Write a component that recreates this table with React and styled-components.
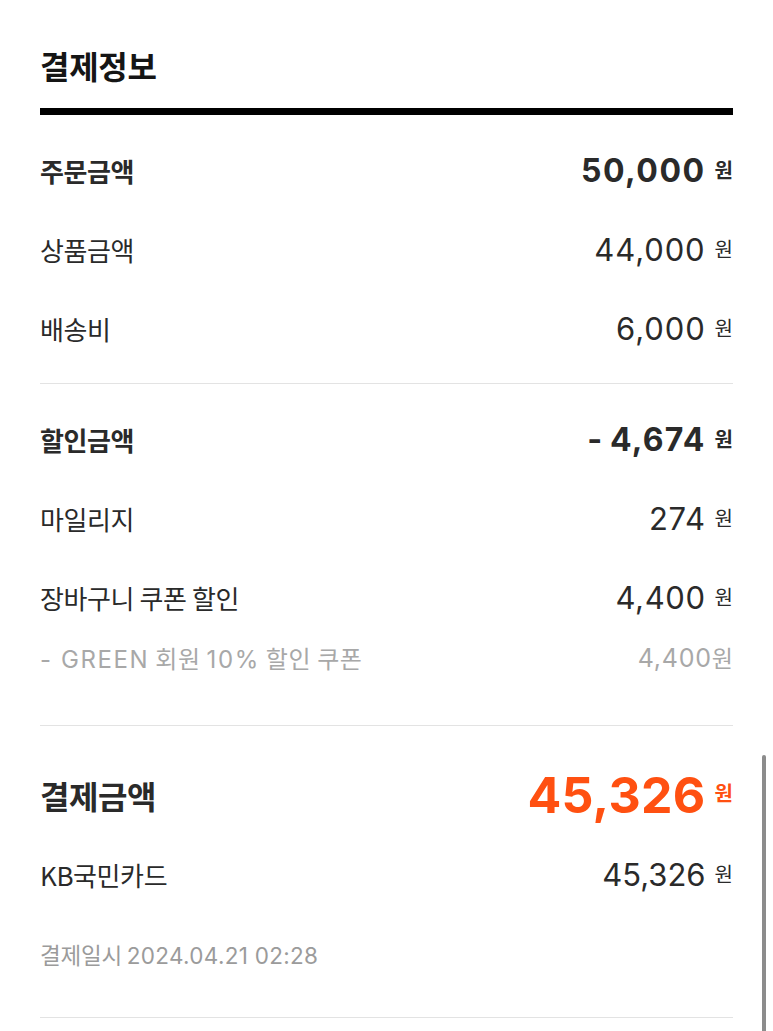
import React from "react";
import styled, { createGlobalStyle } from "styled-components";

const GlobalStyle = createGlobalStyle`
  html, body { margin: 0; padding: 0; background: #ffffff; }
  body { font-family: "Noto Sans CJK KR", "Noto Sans", sans-serif; color: #252525; }
  * { box-sizing: border-box; }
`;

const NUM_FONT = `"Inter", "Noto Sans CJK KR", sans-serif`;

const Page = styled.div`
  width: 773px;
  padding: 0 40px;
`;

const Header = styled.header`
  padding-top: 43px;
`;

const Title = styled.h2`
  margin: 0;
  font-size: 32px;
  font-weight: 700;
  line-height: 44px;
  letter-spacing: -0.3px;
  color: #151515;
`;

const ThickRule = styled.div`
  height: 7px;
  background: #000;
  margin-top: 21px;
`;

const Section = styled.section`
  padding: ${(p) => p.$pad};
  border-bottom: 1px solid #e3e3e3;
`;

const Row = styled.div`
  display: flex;
  align-items: center;
  justify-content: space-between;
  height: ${(p) => p.$h || 79}px;
`;

const Label = styled.span`
  font-size: ${(p) => p.$size || 26}px;
  font-weight: ${(p) => (p.$bold ? 700 : 400)};
  color: ${(p) => p.$color || "#2a2a2a"};
  letter-spacing: ${(p) => p.$ls ?? -0.4}px;
`;

const Amount = styled.span`
  display: flex;
  align-items: baseline;
  gap: ${(p) => (p.$tight ? 0 : 9)}px;
  color: ${(p) => p.$color || "#2a2a2a"};
`;

const Num = styled.span`
  font-family: ${NUM_FONT};
  font-size: ${(p) => p.$size || 31}px;
  font-weight: ${(p) => (p.$bold ? 700 : 400)};
  letter-spacing: ${(p) => p.$ls ?? 0.6}px;
  word-spacing: ${(p) => p.$ws ?? 0}px;
`;

const Won = styled.span`
  font-size: ${(p) => p.$size || 20}px;
  font-weight: ${(p) => (p.$bold ? 700 : 400)};
  position: relative;
  top: ${(p) => p.$lift ?? -4}px;
`;

const Meta = styled.span`
  font-size: 22.5px;
  color: #9b9b9b;
  letter-spacing: -0.2px;
`;

const Latin = styled.span`
  font-family: ${NUM_FONT};
  letter-spacing: ${(p) => p.$ls ?? 0.6}px;
`;

const Scrollbar = styled.div`
  position: fixed;
  right: 7px;
  top: 755px;
  bottom: 0;
  width: 4px;
  border-radius: 2px 2px 0 0;
  background: #8c8c8c;
`;

function Money({ value, bold, size, wonSize, color, ls, ws, lift }) {
  return (
    <Amount $color={color}>
      <Num $bold={bold} $size={size} $ls={ls} $ws={ws}>{value}</Num>
      <Won $bold={bold} $size={wonSize} $lift={lift}>원</Won>
    </Amount>
  );
}

export default function App() {
  return (
    <>
      <GlobalStyle />
      <Page>
        <Header>
          <Title>결제정보</Title>
          <ThickRule />
        </Header>

        <Section $pad="16px 0 15px">
          <Row>
            <Label $bold>주문금액</Label>
            <Money value="50,000" bold size={32} ls={1.5} />
          </Row>
          <Row>
            <Label>상품금액</Label>
            <Money value="44,000" ls={0.9} />
          </Row>
          <Row>
            <Label>배송비</Label>
            <Money value="6,000" ls={0.9} />
          </Row>
        </Section>

        <Section $pad="16px 0 48px">
          <Row>
            <Label $bold>할인금액</Label>
            <Money value="- 4,674" bold size={32} ls={1.2} ws={-2} />
          </Row>
          <Row>
            <Label>마일리지</Label>
            <Money value="274" />
          </Row>
          <Row>
            <Label>장바구니 쿠폰 할인</Label>
            <Money value="4,400" />
          </Row>
          <Row $h={40}>
            <Label $size={24} $ls={0.6} $color="#a8a8a8">
              <Latin $ls={1.6}>-&nbsp;GREEN</Latin> 회원 <Latin $ls={1.6}>10%</Latin> 할인 쿠폰
            </Label>
            <Amount $tight $color="#a8a8a8">
              <Num $size={25} $ls={0.8}>4,400</Num>
              <Won $size={23} $lift={0}>원</Won>
            </Amount>
          </Row>
        </Section>

        <Section $pad="29px 0 24px">
          <Row>
            <Label $bold $size={32}>결제금액</Label>
            <Money value="45,326" bold size={50} ls={0.3} color="#ff5011" wonSize={20} lift={-12} />
          </Row>
          <Row $h={80}>
            <Label>KB국민카드</Label>
            <Money value="45,326" ls={0} />
          </Row>
          <Row>
            <Meta>
              결제일시 <Latin $ls={0.3}>2024.04.21 02:28</Latin>
            </Meta>
          </Row>
        </Section>
      </Page>
      <Scrollbar />
    </>
  );
}
